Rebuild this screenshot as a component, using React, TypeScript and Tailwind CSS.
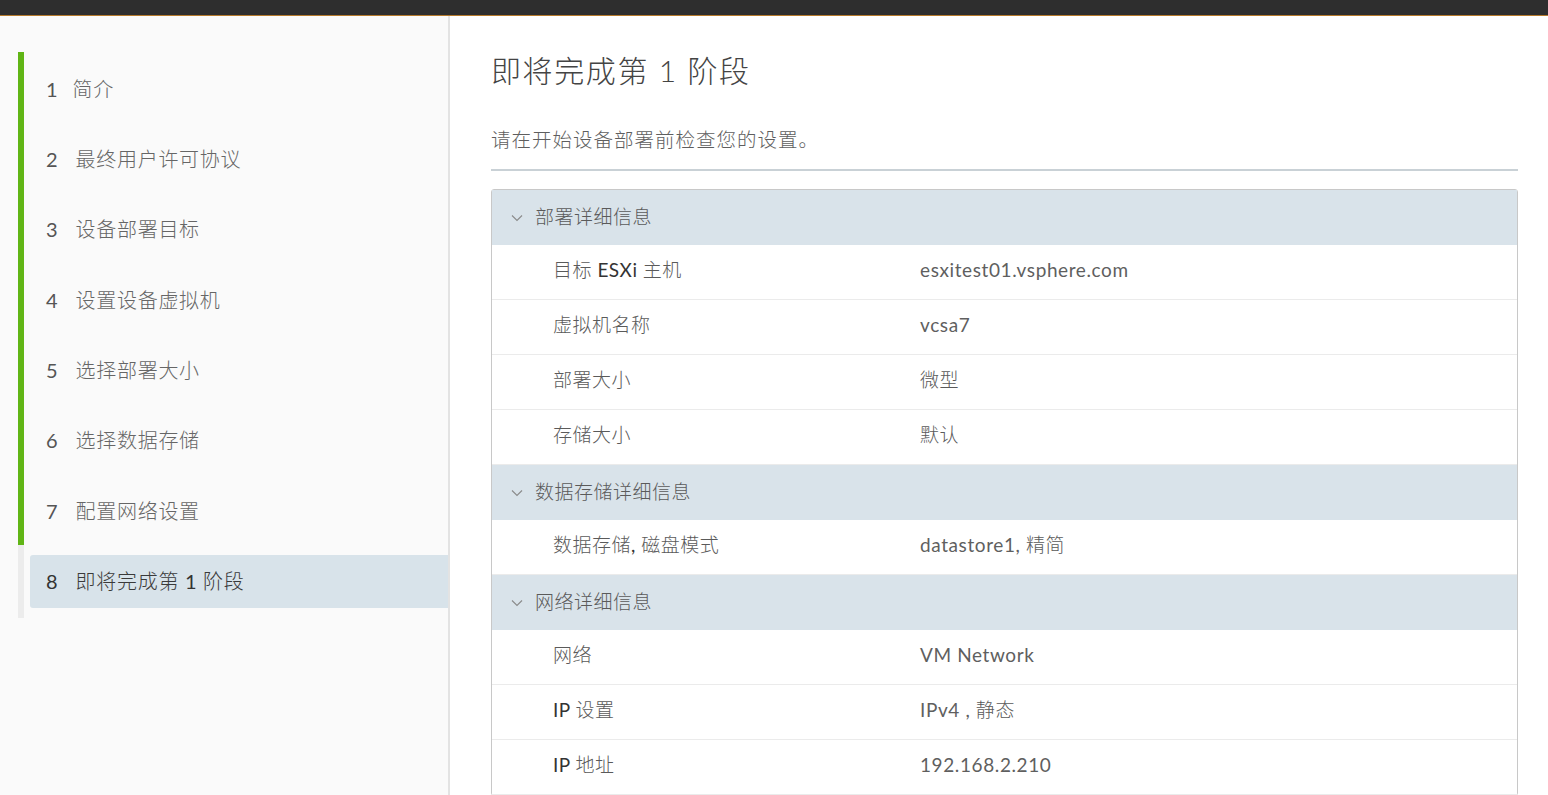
import React from "react";

const FONT = { fontFamily: 'Lato, "Noto Sans CJK SC", sans-serif' };

const steps = [
  "简介",
  "最终用户许可协议",
  "设备部署目标",
  "设置设备虚拟机",
  "选择部署大小",
  "选择数据存储",
  "配置网络设置",
  "即将完成第 1 阶段",
];

type Section = { title: string; rows: [string, string][] };

const sections: Section[] = [
  {
    title: "部署详细信息",
    rows: [
      ["目标 ESXi 主机", "esxitest01.vsphere.com"],
      ["虚拟机名称", "vcsa7"],
      ["部署大小", "微型"],
      ["存储大小", "默认"],
    ],
  },
  {
    title: "数据存储详细信息",
    rows: [["数据存储, 磁盘模式", "datastore1, 精简"]],
  },
  {
    title: "网络详细信息",
    rows: [
      ["网络", "VM Network"],
      ["IP 设置", "IPv4 , 静态"],
      ["IP 地址", "192.168.2.210"],
    ],
  },
];

function Mixed({ text, latin }: { text: string; latin: string }) {
  const parts = text.split(/([\u3000-\u303f\u4e00-\u9fff\uff00-\uffef]+)/).filter((p) => p.length > 0);
  return (
    <>
      {parts.map((p, i) =>
        /[\u3000-\u303f\u4e00-\u9fff\uff00-\uffef]/.test(p) ? (
          <span key={i}>{p}</span>
        ) : (
          <span key={i} className={latin}>
            {p}
          </span>
        )
      )}
    </>
  );
}

function Chevron() {
  return (
    <svg width="12" height="8" viewBox="0 0 12 8" className="shrink-0">
      <path d="M1 1.5 L6 6.5 L11 1.5" fill="none" stroke="#8a8a8a" strokeWidth="1.1" />
    </svg>
  );
}

export default function App() {
  return (
    <div className="w-[1548px] h-[795px] overflow-hidden flex flex-col bg-white font-light" style={FONT}>
      <div className="h-[16px] shrink-0 bg-[#2e2e2e] border-b border-[#b5792b]" />
      <div className="flex flex-1 min-h-0">
        {/* Sidebar */}
        <div className="w-[450px] shrink-0 bg-[#fafafa] border-r-2 border-[#e3e3e3] pt-[36px] pl-[18px]">
          <div className="flex flex-col">
            {steps.map((s, i) => {
              const active = i === steps.length - 1;
              return (
                <div
                  key={i}
                  className={
                    "flex border-l-[6px] " +
                    (active ? "border-[#ececec] pt-[10px] pb-[10px]" : "border-[#60b515] pt-[10px] pb-[7.4px]")
                  }
                >
                  <div
                    className={
                      "ml-[6px] flex-1 h-[53px] flex items-center pl-[16px] rounded-l-[3px] text-[20px] " +
                      (active ? "bg-[#d8e3ea] text-[#3a3a3a]" : "text-[#666]")
                    }
                  >
                    <span className={active ? "text-[#333] font-normal" : "text-[#555] font-normal"}>{i + 1}</span>
                    <span className={(i === 0 ? "ml-[15px]" : "ml-[18px]") + " tracking-[0.7px]"}>
                      <Mixed text={s} latin={active ? "font-normal text-[#333]" : "font-normal"} />
                    </span>
                  </div>
                </div>
              );
            })}
          </div>
        </div>
        {/* Main */}
        <div className="flex-1 pl-[41px] pr-[30px] pt-[36px]">
          <h1 className="text-[30px] leading-[36px] text-[#444] tracking-[1.6px]">
            <Mixed text="即将完成第 1 阶段" latin="" />
          </h1>
          <p className="mt-[40px] text-[19.5px] leading-[24px] text-[#5e5e5e] tracking-[1px]">
            请在开始设备部署前检查您的设置。
          </p>
          <div className="mt-[17px] h-[2px] bg-[#c9d1d6]" />
          <div className="mt-[18px] border border-[#c8c8c8] rounded-[3px] text-[19px] text-[#5a5a5a]">
            {sections.map((sec, si) => (
              <div key={si}>
                <div className="h-[55px] bg-[#d9e3ea] flex items-center pl-[19px]">
                  <Chevron />
                  <span className="ml-[12px] tracking-[0.5px]">{sec.title}</span>
                </div>
                {sec.rows.map(([k, v], ri) => (
                  <div key={ri} className="h-[55px] border-b border-[#ebebeb] flex items-center bg-white pb-[3px]">
                    <div className="w-[428px] pl-[61px] tracking-[0.5px]">
                      <Mixed text={k} latin="font-normal text-[#333]" />
                    </div>
                    <div className="tracking-[0.6px]">
                      <Mixed text={v} latin="font-normal text-[#5f5f5f]" />
                    </div>
                  </div>
                ))}
              </div>
            ))}
          </div>
        </div>
      </div>
    </div>
  );
}
